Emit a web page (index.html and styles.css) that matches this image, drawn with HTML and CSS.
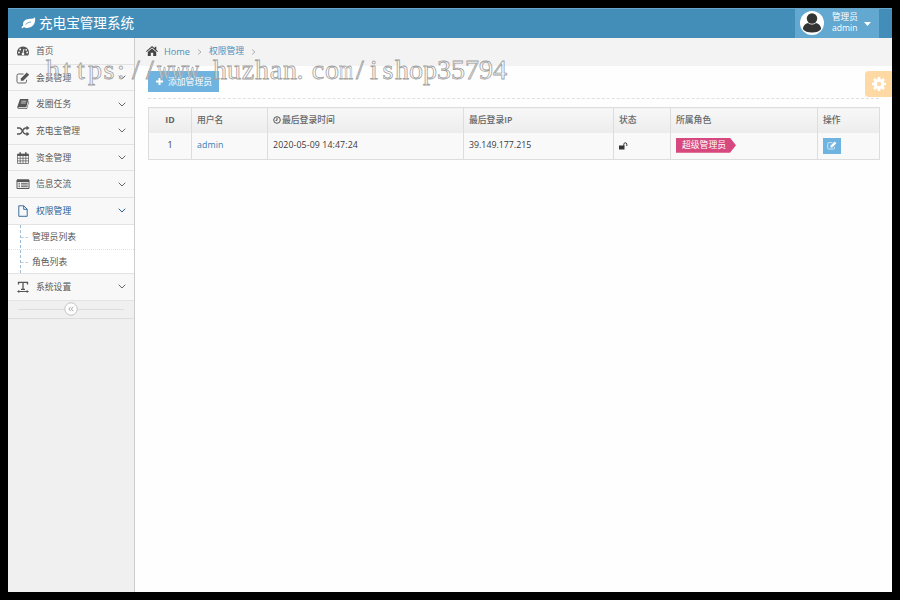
FILE: index.html
```html
<!DOCTYPE html>
<html lang="zh-CN">
<head>
<meta charset="utf-8">
<title>充电宝管理系统</title>
<link rel="stylesheet" href="styles.css">
</head>
<body>
<svg class="defs" width="0" height="0">
  <symbol id="chev" viewBox="0 0 8 5"><path d="M.7.7 4 4 7.3.7" fill="none" stroke="currentColor" stroke-width="1"/></symbol>
  <symbol id="edit" viewBox="0 0 14 12"><path d="M10.500 7.800V9.600Q10.500 11 9 11H2.400Q1 11 1 9.600V3.400Q1 2 2.400 2H7.500" fill="none" stroke="currentColor" stroke-width=".9"/><path d="M4.800 8.800V6.400L10.800.5 13.200 2.800 7.200 8.800Z" fill="currentColor"/></symbol>
</svg>
<div class="app">
  <header class="navbar">
    <div class="brand">
      <svg width="15" height="12" viewBox="0 0 15 12"><path d="M14 .3C12.600 1.900 10 1.800 7.800 2 4 2.300 2 4.600 2 7.200c0 .7.1 1.100.2 1.400C1.500 9.200.4 10.100.6 10.800c.4.900 1.300.4 2.300-.8 1 .6 2.100 1 3.500.9C11.900 10.600 15 6.500 14 .3Z" fill="#fff"/><path d="M4.500 7.700C6 6 7.500 5.300 10 5" fill="none" stroke="#438eb9" stroke-width=".8"/></svg>
      <span>充电宝管理系统</span>
    </div>
    <div class="user">
      <svg class="avatar" width="24" height="24" viewBox="0 0 24 24"><circle cx="12" cy="12" r="12" fill="#fff"/><path d="M2.800 18Q3.500 13 8 12 12 15 16 12 20.500 13 21.200 18 18.500 21.500 12 21.500T2.800 18Z" fill="#333"/><circle cx="12" cy="7.500" r="5.200" fill="#333"/></svg>
      <div class="who"><span>管理员</span><span>admin</span></div>
      <svg width="7" height="4" viewBox="0 0 7 4"><path d="M0 0H7L3.500 4Z" fill="#fff"/></svg>
    </div>
  </header>
  <div class="main">
    <nav class="sidebar">
      <a class="item"><svg class="ic" viewBox="0 0 14 12"><path d="M1.800 10.500A6 6 0 1 1 12.200 10.500Z" fill="currentColor"/><path d="M6.800 8.800 8 4" stroke="#f8f8f8" stroke-width="1"/><g fill="#f8f8f8"><circle cx="7" cy="9" r="1.300"/><circle cx="3" cy="7.500" r=".9"/><circle cx="4.200" cy="4.500" r=".9"/><circle cx="10.200" cy="4.800" r=".9"/><circle cx="11.200" cy="7.500" r=".9"/></g></svg><span>首页</span></a>
      <a class="item"><svg class="ic"><use href="#edit"/></svg><span>会员管理</span><svg class="chev"><use href="#chev"/></svg></a>
      <a class="item"><svg class="ic" viewBox="0 0 14 12"><path d="M4 1H12.500L10.300 9.200H2.500Q2 10.200 3 10.200H10.700L12.800 2.800Q13.300 3 13 4L11 11H3Q.800 10.800 1.300 8.800Z" fill="currentColor"/><path d="M5.300 3.200H10.300M4.800 5H9.800" stroke="#f8f8f8" stroke-width=".7"/></svg><span>发圈任务</span><svg class="chev"><use href="#chev"/></svg></a>
      <a class="item"><svg class="ic" viewBox="0 0 14 12"><path d="M1 3H3.500C6.500 3 6.500 9 9.500 9H11M1 9H3.500C6.500 9 6.500 3 9.500 3H11" fill="none" stroke="currentColor" stroke-width="1.500"/><path d="M10.500.7 13.500 3 10.500 5.300ZM10.500 6.700 13.500 9 10.500 11.300Z" fill="currentColor"/></svg><span>充电宝管理</span><svg class="chev"><use href="#chev"/></svg></a>
      <a class="item"><svg class="ic" viewBox="0 0 14 12"><path d="M1.500 2H12.500V11.500H1.500ZM1.500 6.300H12.500M1.500 8.900H12.500M4.200 4V11.500M7 4V11.500M9.800 4V11.500" fill="none" stroke="currentColor" stroke-width=".7"/><path d="M1.500 2H12.500V4H1.500Z" fill="currentColor"/><path d="M4.200.3V3M9.800.3V3" stroke="currentColor" stroke-width="1.500"/></svg><span>资金管理</span><svg class="chev"><use href="#chev"/></svg></a>
      <a class="item"><svg class="ic" viewBox="0 0 14 12"><path d="M1 2H13V10.500H1Z" fill="none" stroke="currentColor"/><path d="M1 1.500H13V4H1Z" fill="currentColor"/><path d="M2.500 5.300H4M5 5.300H11.800M2.500 7H4M5 7H11.800M2.500 8.700H4M5 8.700H11.800" stroke="currentColor" stroke-width=".9"/></svg><span>信息交流</span><svg class="chev"><use href="#chev"/></svg></a>
      <a class="item active"><svg class="ic" viewBox="0 0 14 12"><path d="M2.800.8H7.800L11.200 4.200V11.300H2.800ZM7.700.8V4.300H11.200" fill="none" stroke="currentColor" stroke-width=".9"/></svg><span>权限管理</span><svg class="chev"><use href="#chev"/></svg></a>
      <div class="submenu">
        <a>管理员列表</a>
        <a>角色列表</a>
      </div>
      <a class="item"><svg class="ic" viewBox="0 0 14 12"><path d="M2.500 3.500V1.300H11.500V3.500M7 1.300V8.300M5 8.300H9" fill="none" stroke="currentColor" stroke-width="1.300"/><path d="M2 10.500H12" stroke="currentColor"/><path d="M1 10.500 3.300 9V12ZM13 10.500 10.700 9V12Z" fill="currentColor"/></svg><span>系统设置</span><svg class="chev"><use href="#chev"/></svg></a>
      <div class="collapse"><i></i><svg width="14" height="14" viewBox="0 0 14 14"><circle cx="7" cy="7" r="6.200" fill="#fff" stroke="#bbb" stroke-width=".9"/><path d="M6.800 4.800 4.800 7 6.800 9.200M9.300 4.800 7.300 7 9.300 9.200" fill="none" stroke="#999" stroke-width=".9"/></svg><i></i></div>
    </nav>
    <section class="content">
      <div class="crumbs">
        <svg width="12" height="10" viewBox="0 0 12 10"><path d="M0 5.200 6 0 8.700 2.300V.7H10.300V3.700L12 5.200 11.300 6 6 1.500.7 6Z" fill="#444"/><path d="M1.800 5.900 6 2.400 10.200 5.900V10H7.200V6.800H4.800V10H1.800Z" fill="#444"/></svg>
        <a class="home">Home</a><svg class="sep" viewBox="0 0 5 6"><path d="M1 .5 4 3 1 5.500"/></svg><a class="crumb">权限管理</a><svg class="sep" viewBox="0 0 5 6"><path d="M1 .5 4 3 1 5.500"/></svg>
      </div>
      <div class="page">
        <div class="tools"><button class="add"><svg width="7" height="7" viewBox="0 0 7 7"><path d="M3.500 0V7M0 3.500H7" stroke="#fff" stroke-width="2"/></svg><span>添加管理员</span></button></div>
        <table>
          <colgroup><col class="c1"><col class="c2"><col class="c3"><col class="c4"><col class="c5"><col class="c6"><col class="c7"></colgroup>
          <thead><tr><th class="mid">ID</th><th>用户名</th><th><svg class="clock" width="8" height="8" viewBox="0 0 8 8"><circle cx="4" cy="4" r="3.300"/><path d="M4 1.800V4.400H2.500"/></svg>最后登录时间</th><th>最后登录<b>IP</b></th><th>状态</th><th>所属角色</th><th>操作</th></tr></thead>
          <tbody><tr><td class="mid">1</td><td><a>admin</a></td><td class="date">2020-05-09 14:47:24</td><td>39.149.177.215</td>
            <td><svg width="9" height="8" viewBox="0 0 9 8"><path d="M0 3.500H5.500V7.500H0Z" fill="#333"/><path d="M4.800 4V2.300Q4.900.8 6.300.8T7.800 2.300V4" fill="none" stroke="#333"/></svg></td>
            <td><span class="label">超级管理员</span></td>
            <td><span class="btn-edit"><svg width="10" height="9"><use href="#edit"/></svg></span></td></tr></tbody>
        </table>
      </div>
    </section>
  </div>
  <div class="settings"><svg width="14" height="14" viewBox="0 0 14 14"><circle cx="7" cy="7" r="3.700" fill="none" stroke="#fff" stroke-width="3"/><path d="M7 0V3M7 11V14M0 7H3M11 7H14M2 2 4 4M10 10 12 12M12 2 10 4M4 10 2 12" stroke="#fff" stroke-width="2.700"/></svg></div>
  <svg class="watermark" width="470" height="36">
    <text y="25" x="8 22 36 50 64 76 91 105">https://</text>
    <text class="fit" y="25" x="112" textLength="42" lengthAdjust="spacingAndGlyphs">www</text>
    <text y="25" x="157 175 189 203 217 231 245 255 273 287">.huzhan.co</text>
    <text class="fit" y="25" x="294" textLength="14" lengthAdjust="spacingAndGlyphs">m</text>
    <text y="25" x="315 329 343 357 371 385 399 413 427 441 455">/ishop35794</text>
  </svg>
</div>
</body>
</html>
```
FILE: styles.css
```css
* { box-sizing: border-box; }
body {
  margin: 0;
  padding: 8px;
  height: 600px;
  background: #000;
  color: #444;
  font: 8.8px/13px "Open Sans", "Noto Sans CJK SC", sans-serif;
  overflow: hidden;
}
svg { flex: none; }
.defs { position: absolute; }
.app {
  position: relative;
  height: 584px;
  display: flex;
  flex-direction: column;
  background: #fefefe;
}
.navbar {
  height: 30px;
  flex: none;
  display: flex;
  justify-content: space-between;
  padding: 0 13px;
  background: #438eb9;
  border-top: 1px solid #69a5c8;
  color: #fff;
}
.brand {
  display: flex;
  align-items: center;
  gap: 3px;
  padding-bottom: 2px;
  font-size: 13.6px;
  line-height: 26px;
}
.user {
  width: 84px;
  display: flex;
  align-items: center;
  padding-left: 5px;
  background: #62a8d1;
}
.avatar { margin-bottom: 2px; }
.who {
  display: flex;
  flex-direction: column;
  width: 27px;
  margin: 0 5px 2px 8px;
  line-height: 10.5px;
  font-size: 8.6px;
  white-space: nowrap;
}
.main { flex: 1; display: flex; min-height: 0; }
.sidebar {
  width: 127px;
  flex: none;
  background: #f0f0f0;
  border-right: 1px solid #ccc;
}
.item {
  display: flex;
  align-items: center;
  height: 26.7px;
  padding: 0 8px;
  background: #f8f8f8;
  border-bottom: 1px solid #e3e3e3;
  color: #585858;
}
.item span { padding-top: 1.4px; }
.ic { width: 14px; height: 12px; margin-right: 6px; color: #555; }
.chev { width: 8px; height: 5px; margin-left: auto; color: #666; }
.item.active, .item.active .ic, .item.active .chev { color: #2b5f96; }
.submenu {
  position: relative;
  height: 49px;
  background: #fff;
  border-bottom: 1px solid #e3e3e3;
}
.submenu::before {
  content: "";
  position: absolute;
  left: 12px;
  top: 0;
  bottom: 0;
  border-left: 1px dashed #9dbdd6;
}
.submenu a {
  display: flex;
  align-items: center;
  height: 24.5px;
  padding-left: 13px;
  color: #555;
}
.submenu a + a { border-top: 1px dotted #dde3e8; }
.submenu a::before {
  content: "";
  width: 7px;
  margin-right: 4px;
  border-top: 1px dashed #bcd0e0;
}
.collapse {
  height: 18px;
  display: flex;
  align-items: center;
  padding: 0 10px;
  border-bottom: 1px solid #ddd;
}
.collapse i { flex: 1; border-top: 1px solid #ddd; }
.content { flex: 1; min-width: 0; }
.crumbs {
  height: 28px;
  display: flex;
  align-items: center;
  padding: 0 11px 2px;
  background: #f3f3f3;
  color: #4c8fbd;
}
.home { margin-left: 6px; font-size: 9.2px; }
.crumb { padding-top: 1px; }
.sep {
  width: 5px;
  height: 6px;
  margin: 1px 7px 0;
  fill: none;
  stroke: #aaa;
  stroke-width: .9;
}
.page { padding: 5px 13px; }
.tools {
  height: 28px;
  border-bottom: 1px dashed #e0e0e0;
  margin-bottom: 8px;
}
.add {
  display: flex;
  align-items: center;
  gap: 5px;
  width: 71px;
  height: 21px;
  padding: 0 0 0 8px;
  border: 0;
  background: #6fb3e0;
  color: #fff;
  font: inherit;
  white-space: nowrap;
}
.add span { padding-top: 2px; }
table {
  width: 732px;
  table-layout: fixed;
  border-collapse: collapse;
}
.c1 { width: 43px; }
.c2 { width: 76px; }
.c3 { width: 196px; }
.c4 { width: 150px; }
.c5 { width: 57px; }
.c6 { width: 147px; }
.c7 { width: 62px; }
th, td {
  padding: 0 5px;
  border: 1px solid #ddd;
  text-align: left;
  vertical-align: middle;
  white-space: nowrap;
}
th {
  height: 25px;
  border-bottom: 0;
  background: linear-gradient(#f8f8f8, #ececec);
  color: #666;
  font-weight: 500;
}
th b { font-weight: 600; }
td { height: 27px; background: #f9f9f9; border-top: 0; color: #393939; }
.date { letter-spacing: .1px; }
.mid { text-align: center; }
th.mid { font-weight: 700; }
td a { color: #337fb5; letter-spacing: .1px; }
td svg { display: block; }
.clock {
  display: inline-block;
  vertical-align: -1px;
  margin-right: 1px;
  fill: none;
  stroke: #555;
}
.label {
  display: block;
  width: 60px;
  height: 15px;
  margin-top: -1px;
  padding-left: 6px;
  line-height: 14px;
  background: #d6487e;
  color: #fff;
  clip-path: polygon(0 0, 54px 0, 100% 50%, 54px 100%, 0 100%);
}
.btn-edit {
  display: flex;
  align-items: center;
  justify-content: center;
  width: 18px;
  height: 16px;
  background: #6fb3e0;
  color: #fff;
}
.settings {
  position: absolute;
  right: 0;
  top: 63px;
  width: 27px;
  height: 26px;
  display: flex;
  align-items: center;
  justify-content: center;
  background: #ffd9a4;
  border-radius: 4px 0 0 4px;
}
.watermark { position: absolute; left: 37px; top: 46px; pointer-events: none; }
.watermark text {
  font: 28px "Liberation Serif", serif;
  text-anchor: middle;
  fill: rgba(255, 255, 255, .5);
  stroke: #a0a0a0;
  stroke-width: .8;
}
.watermark .fit { text-anchor: start; }
```
